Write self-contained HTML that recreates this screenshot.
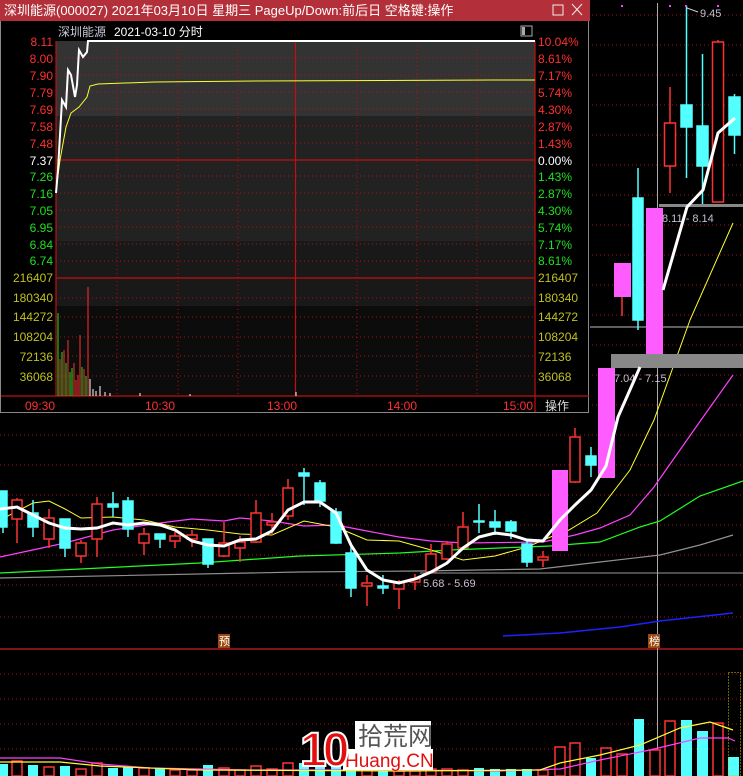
<!DOCTYPE html>
<html><head><meta charset="utf-8"><style>
html,body{margin:0;padding:0;background:#000;width:743px;height:776px;overflow:hidden}
svg{display:block}
text{font-family:"Liberation Sans","Noto Sans CJK SC",sans-serif}
</style></head><body>
<svg width="743" height="776" viewBox="0 0 743 776" xmlns="http://www.w3.org/2000/svg">
<rect width="743" height="776" fill="#000"/>
<!-- main grid dotted -->
<g stroke="#a01010" stroke-width="1" stroke-dasharray="1,3">
<line x1="0" y1="15" x2="743" y2="15"/><line x1="0" y1="45" x2="743" y2="45"/><line x1="0" y1="75" x2="743" y2="75"/>
<line x1="0" y1="105" x2="743" y2="105"/><line x1="0" y1="135" x2="743" y2="135"/><line x1="0" y1="165" x2="743" y2="165"/>
<line x1="0" y1="195" x2="743" y2="195"/><line x1="0" y1="225" x2="743" y2="225"/><line x1="0" y1="255" x2="743" y2="255"/>
<line x1="0" y1="285" x2="743" y2="285"/><line x1="0" y1="315" x2="743" y2="315"/><line x1="0" y1="345" x2="743" y2="345"/>
<line x1="0" y1="375" x2="743" y2="375"/><line x1="0" y1="405" x2="743" y2="405"/><line x1="0" y1="435" x2="743" y2="435"/>
<line x1="0" y1="465" x2="743" y2="465"/><line x1="0" y1="495" x2="743" y2="495"/><line x1="0" y1="525" x2="743" y2="525"/>
<line x1="0" y1="555" x2="743" y2="555"/><line x1="0" y1="585" x2="743" y2="585"/><line x1="0" y1="617" x2="743" y2="617"/>
<line x1="0" y1="674" x2="743" y2="674"/><line x1="0" y1="699" x2="743" y2="699"/><line x1="0" y1="724" x2="743" y2="724"/><line x1="0" y1="749" x2="743" y2="749"/>
</g>
<line x1="0" y1="649" x2="743" y2="649" stroke="#b01818" stroke-width="1.5"/>
<!-- grey level lines -->
<line x1="420" y1="573" x2="743" y2="573" stroke="#9a9a9a" stroke-width="1"/>
<line x1="590" y1="327" x2="743" y2="327" stroke="#bbb" stroke-width="1"/>
<line x1="657.5" y1="3" x2="657.5" y2="776" stroke="#aaa" stroke-width="1"/>
<!-- MAs -->
<g fill="none">
<polyline stroke="#909090" stroke-width="1.2" points="0,578 300,572 420,571 540,569 600,562 660,555 700,545 733,535"/>
<polyline stroke="#20ff20" stroke-width="1.2" points="0,573 200,563 300,556 400,553 450,550 550,546 600,542 640,527 660,521 700,496 743,481"/>
<polyline stroke="#ff40ff" stroke-width="1.2" points="0,557 65,543 113,530 160,523 192,519 224,521 240,518 272,521 304,526 336,525 367,531 399,537 431,541 463,543 543,542 575,535 600,528 630,515 654,487 701,420 733,375"/>
<polyline stroke="#ffff30" stroke-width="1" points="0,520 33,503 49,501 65,509 81,518 113,517 144,520 175,527 208,530 240,534 272,535 304,521 336,527 367,540 399,541 431,550 463,560 495,556 527,547 560,533 569,530 597,513 630,470 654,420 690,320 733,223"/>
<polyline stroke="#2020ff" stroke-width="1.5" points="503,636 560,633 620,627 660,621 733,613"/>
</g>
<!-- candles -->
<g stroke-width="1.5">
<g stroke="#54ffff" fill="#54ffff">
<line x1="3" y1="491" x2="3" y2="533"/><rect x="-3" y="491" width="10" height="36"/>
<line x1="33" y1="500" x2="33" y2="537"/><rect x="28" y="513" width="10" height="14"/>
<line x1="65" y1="519" x2="65" y2="557"/><rect x="60" y="519" width="10" height="29"/>
<line x1="113" y1="492" x2="113" y2="517"/><rect x="108" y="504" width="10" height="3"/>
<line x1="128" y1="497" x2="128" y2="537"/><rect x="123" y="501" width="10" height="28"/>
<line x1="160" y1="534" x2="160" y2="548"/><rect x="155" y="534" width="10" height="5"/>
<line x1="208" y1="539" x2="208" y2="568"/><rect x="203" y="539" width="10" height="25"/>
<line x1="304" y1="468" x2="304" y2="505"/><rect x="299" y="473" width="10" height="3"/>
<line x1="320" y1="480" x2="320" y2="507"/><rect x="315" y="483" width="10" height="18"/>
<line x1="336" y1="508" x2="336" y2="544"/><rect x="331" y="512" width="10" height="31"/>
<line x1="351" y1="545" x2="351" y2="597"/><rect x="346" y="553" width="10" height="35"/>
<line x1="383" y1="575" x2="383" y2="594"/><rect x="378" y="586" width="10" height="2"/>
<line x1="479" y1="504" x2="479" y2="533"/><rect x="474" y="521" width="10" height="1"/>
<line x1="495" y1="510" x2="495" y2="535"/><rect x="490" y="522" width="10" height="5"/>
<line x1="511" y1="520" x2="511" y2="539"/><rect x="506" y="522" width="10" height="9"/>
<line x1="527" y1="541" x2="527" y2="567"/><rect x="522" y="544" width="10" height="18"/>
<line x1="591" y1="447" x2="591" y2="477"/><rect x="586" y="456" width="10" height="9"/>
<line x1="638" y1="168" x2="638" y2="330"/><rect x="633" y="198" width="10" height="122"/>
<line x1="686.5" y1="6" x2="686.5" y2="178"/><rect x="681" y="105" width="11" height="22"/>
<line x1="702.5" y1="54" x2="702.5" y2="205"/><rect x="697" y="126" width="11" height="40"/>
<line x1="734.5" y1="94" x2="734.5" y2="154"/><rect x="729" y="97" width="11" height="38"/>
</g>
<g stroke="#ff3232" fill="#000">
<line x1="17" y1="498" x2="17" y2="543"/><rect x="12" y="500" width="10" height="19"/>
<line x1="49" y1="509" x2="49" y2="548"/><rect x="44" y="518" width="10" height="21"/>
<line x1="81" y1="540" x2="81" y2="563"/><rect x="76" y="543" width="10" height="13"/>
<line x1="97" y1="497" x2="97" y2="557"/><rect x="92" y="504" width="10" height="35"/>
<line x1="144" y1="528" x2="144" y2="555"/><rect x="139" y="534" width="10" height="9"/>
<line x1="175" y1="532" x2="175" y2="548"/><rect x="170" y="536" width="10" height="5"/>
<line x1="192" y1="530" x2="192" y2="547"/><rect x="187" y="535" width="10" height="4"/>
<line x1="224" y1="522" x2="224" y2="557"/><rect x="219" y="543" width="10" height="13"/>
<line x1="240" y1="536" x2="240" y2="562"/><rect x="235" y="542" width="10" height="6"/>
<line x1="256" y1="500" x2="256" y2="543"/><rect x="251" y="513" width="10" height="29"/>
<line x1="272" y1="513" x2="272" y2="535"/><rect x="267" y="522" width="10" height="3"/>
<line x1="288" y1="479" x2="288" y2="520"/><rect x="283" y="488" width="10" height="28"/>
<line x1="367" y1="575" x2="367" y2="606"/><rect x="362" y="583" width="10" height="3"/>
<line x1="399" y1="580" x2="399" y2="609"/><rect x="394" y="582" width="10" height="7"/>
<line x1="415" y1="574" x2="415" y2="590"/><rect x="410" y="579" width="10" height="3"/>
<line x1="431" y1="544" x2="431" y2="573"/><rect x="426" y="554" width="10" height="18"/>
<line x1="447" y1="541" x2="447" y2="560"/><rect x="442" y="544" width="10" height="15"/>
<line x1="463" y1="512" x2="463" y2="548"/><rect x="458" y="527" width="10" height="21"/>
<line x1="543" y1="551" x2="543" y2="567"/><rect x="538" y="557" width="10" height="3"/>
<line x1="575" y1="428" x2="575" y2="483"/><rect x="570" y="437" width="10" height="45"/>
<line x1="670" y1="87" x2="670" y2="193"/><rect x="664.5" y="123" width="11" height="43"/>
<line x1="718" y1="40" x2="718" y2="202"/><rect x="712.5" y="42" width="11" height="160"/>
</g>
<g fill="#ff5cff" stroke="none">
<rect x="552" y="470" width="16" height="81"/>
<rect x="598" y="368" width="17" height="110"/>
<rect x="614" y="263" width="17" height="34"/>
<rect x="646" y="208" width="17" height="146"/>
</g>
<line x1="622" y1="297" x2="622" y2="316" stroke="#ff3232" stroke-width="1.5"/>
</g>
<!-- grey zone boxes -->
<rect x="659" y="204" width="84" height="3" fill="#888"/>
<rect x="611" y="354" width="132" height="14" fill="#888"/>
<text x="662" y="222" font-size="11" fill="#c0c0d0">8.11 - 8.14</text>
<text x="614" y="382" font-size="11" fill="#c0c0d0">7.04 - 7.15</text>
<text x="423" y="587" font-size="11" fill="#c0c0d0">5.68 - 5.69</text>
<text x="700" y="17" font-size="11" fill="#c0c0d0">9.45</text>
<polyline points="687,8 698,12" stroke="#ccc" fill="none"/>
<g fill="#ff40ff"><rect x="621" y="5" width="2" height="2"/><rect x="669" y="5" width="2" height="2"/><rect x="685" y="5" width="2" height="2"/><rect x="717" y="5" width="2" height="2"/></g>
<!-- MA5 white -->
<polyline fill="none" stroke="#fff" stroke-width="3" points="0,509 17,507 33,515 49,523 65,528 81,529 97,528 113,523 128,525 144,523 160,525 175,530 192,541 208,545 224,546 240,540 256,539 272,531 288,510 304,502 320,502 336,513 351,545 367,570 383,580 399,583 415,579 431,572 447,563 463,548 479,537 495,533 511,535 527,540 543,541 560,520 575,505 591,490 606,466 618,417 640,367"/>
<polyline fill="none" stroke="#fff" stroke-width="3" points="663,290 687,207 703,190 718,133 735,118"/>
<!-- markers -->
<rect x="218" y="634" width="12" height="14" fill="#9a4a10"/><text x="219" y="645" font-size="11" fill="#fff">预</text>
<rect x="648" y="634" width="12" height="14" fill="#9a4a10"/><text x="649" y="645" font-size="11" fill="#fff">榜</text>
<!-- volume -->
<g stroke-width="1.5">
<g fill="#54ffff" stroke="none">
<rect x="-2" y="764" width="10" height="12"/><rect x="28" y="765" width="10" height="11"/><rect x="60" y="766" width="10" height="10"/>
<rect x="108" y="768" width="10" height="8"/><rect x="123" y="766" width="10" height="10"/><rect x="155" y="768" width="10" height="8"/>
<rect x="203" y="765" width="10" height="11"/><rect x="299" y="763" width="10" height="13"/><rect x="315" y="765" width="10" height="11"/>
<rect x="331" y="765" width="10" height="11"/><rect x="346" y="765" width="10" height="11"/><rect x="378" y="769" width="10" height="7"/>
<rect x="474" y="768" width="10" height="8"/><rect x="490" y="769" width="10" height="7"/><rect x="506" y="769" width="10" height="7"/>
<rect x="522" y="769" width="10" height="7"/><rect x="586" y="758" width="10" height="18"/><rect x="634" y="719" width="10" height="57"/>
<rect x="681" y="720" width="11" height="56"/><rect x="697" y="731" width="11" height="45"/><rect x="728" y="757" width="11" height="19"/>
</g>
<g fill="#000" stroke="#ff3232">
<rect x="12" y="761" width="10" height="15"/><rect x="44" y="767" width="10" height="9"/><rect x="76" y="769" width="10" height="7"/>
<rect x="92" y="763" width="10" height="13"/><rect x="139" y="768" width="10" height="8"/><rect x="170" y="770" width="10" height="6"/>
<rect x="187" y="770" width="10" height="6"/><rect x="219" y="768" width="10" height="8"/><rect x="235" y="770" width="10" height="6"/>
<rect x="251" y="766" width="10" height="10"/><rect x="267" y="769" width="10" height="7"/><rect x="283" y="763" width="10" height="13"/>
<rect x="362" y="770" width="10" height="6"/><rect x="394" y="771" width="10" height="5"/><rect x="410" y="771" width="10" height="5"/>
<rect x="426" y="769" width="10" height="7"/><rect x="442" y="769" width="10" height="7"/><rect x="458" y="770" width="10" height="6"/>
<rect x="538" y="770" width="10" height="6"/><rect x="555" y="747" width="10" height="29"/><rect x="570" y="743" width="10" height="33"/>
<rect x="601" y="748" width="10" height="28"/><rect x="617" y="754" width="10" height="22"/><rect x="650" y="750" width="10" height="26"/>
<rect x="665" y="721" width="10" height="55"/><rect x="713" y="723" width="10" height="53"/>
</g>
</g>
<rect x="728.5" y="672.5" width="12" height="103" fill="none" stroke="#cc0" stroke-dasharray="1,2"/>
<polyline fill="none" stroke="#ff40ff" stroke-width="1.2" points="0,758 40,758 60,758 100,764 150,768 250,770 400,770 500,771 560,769 600,760 650,750 700,738 728,738 735,741"/>
<polyline fill="none" stroke="#ffff30" stroke-width="1.2" points="0,762 60,762 100,766 200,770 400,771 540,770 560,763 600,755 640,745 680,728 710,722 733,730"/>
<!-- watermark -->
<rect x="355" y="721" width="76" height="29" fill="#fff"/>
<text x="358" y="745" font-size="25" fill="#555" font-family="'Noto Sans CJK SC',sans-serif">拾荒网</text>
<rect x="343" y="749" width="90" height="21" fill="#fff"/>
<text x="345" y="767" font-size="19" fill="#e01010">Huang.CN</text>
<text x="300" y="766" font-size="48" font-weight="bold" fill="#e01010" stroke="#fff" stroke-width="2" letter-spacing="-4">10</text>
<!-- POPUP -->
<rect x="0" y="0" width="590" height="413" fill="#000"/>
<rect x="0.5" y="20.5" width="588" height="392" fill="none" stroke="#888" stroke-width="1"/>
<rect x="0" y="0" width="590" height="21" fill="#b3303a"/>
<text x="4" y="15" font-size="13" fill="#fff">深圳能源(000027) 2021年03月10日 星期三 PageUp/Down:前后日 空格键:操作</text>
<rect x="553" y="5" width="10" height="10" fill="none" stroke="#eee"/>
<path d="M572,4 L582,15 M582,4 L572,15" stroke="#eee" stroke-width="1"/>
<text x="58" y="36" font-size="12" fill="#c8c8d8">深圳能源</text><text x="114" y="36" font-size="12" fill="#fff">2021-03-10 分时</text>
<rect x="521" y="26" width="11" height="10" fill="none" stroke="#aaa"/><rect x="522" y="27" width="3" height="8" fill="#aaa"/>
<!-- plot bg -->
<rect x="56" y="41" width="479" height="75" fill="#333"/>
<rect x="56" y="116" width="479" height="125" fill="#222"/>
<rect x="56" y="241" width="479" height="65" fill="#191919"/>
<rect x="56" y="306" width="479" height="90" fill="#0c0c0c"/>
<g stroke="#b01010" stroke-dasharray="1,3">
<line x1="56" y1="58" x2="535" y2="58"/><line x1="56" y1="75" x2="535" y2="75"/><line x1="56" y1="92" x2="535" y2="92"/>
<line x1="56" y1="109" x2="535" y2="109"/><line x1="56" y1="126" x2="535" y2="126"/><line x1="56" y1="143" x2="535" y2="143"/>
<line x1="56" y1="176" x2="535" y2="176"/><line x1="56" y1="193" x2="535" y2="193"/><line x1="56" y1="210" x2="535" y2="210"/>
<line x1="56" y1="227" x2="535" y2="227"/><line x1="56" y1="244" x2="535" y2="244"/><line x1="56" y1="261" x2="535" y2="261"/>
<line x1="56" y1="298" x2="535" y2="298"/><line x1="56" y1="317" x2="535" y2="317"/><line x1="56" y1="337" x2="535" y2="337"/>
<line x1="56" y1="356" x2="535" y2="356"/><line x1="56" y1="376" x2="535" y2="376"/>
<line x1="117" y1="41" x2="117" y2="396"/><line x1="178" y1="41" x2="178" y2="396"/><line x1="238" y1="41" x2="238" y2="396"/>
<line x1="357" y1="41" x2="357" y2="396"/><line x1="417" y1="41" x2="417" y2="396"/><line x1="477" y1="41" x2="477" y2="396"/>
</g>
<g stroke="#c01010" stroke-width="1.2">
<line x1="56" y1="41" x2="56" y2="396"/><line x1="535" y1="41" x2="535" y2="412"/>
<line x1="56" y1="160" x2="535" y2="160"/><line x1="56" y1="278" x2="535" y2="278"/>
<line x1="295.5" y1="41" x2="295.5" y2="396"/><line x1="1" y1="396" x2="589" y2="396"/>
</g>
<!-- intraday volume -->
<g stroke-width="1">
<line x1="58" y1="313" x2="58" y2="396" stroke="#20e020"/><line x1="60" y1="359" x2="60" y2="396" stroke="#ff3030"/>
<line x1="62" y1="352" x2="62" y2="396" stroke="#20e020"/><line x1="64" y1="350" x2="64" y2="396" stroke="#ff3030"/>
<line x1="66" y1="363" x2="66" y2="396" stroke="#20e020"/><line x1="68" y1="340" x2="68" y2="396" stroke="#ff3030"/>
<line x1="70" y1="372" x2="70" y2="396" stroke="#20e020"/><line x1="72" y1="368" x2="72" y2="396" stroke="#20e020"/>
<line x1="74" y1="363" x2="74" y2="396" stroke="#ff3030"/><line x1="76" y1="380" x2="76" y2="396" stroke="#ff3030"/>
<line x1="78" y1="375" x2="78" y2="396" stroke="#ff3030"/><line x1="80" y1="335" x2="80" y2="396" stroke="#ff3030"/>
<line x1="82" y1="367" x2="82" y2="396" stroke="#20e020"/><line x1="84" y1="369" x2="84" y2="396" stroke="#ff3030"/>
<line x1="86" y1="376" x2="86" y2="396" stroke="#20e020"/><line x1="88" y1="287" x2="88" y2="396" stroke="#ff3030"/>
<line x1="90" y1="379" x2="90" y2="396" stroke="#fff"/><line x1="93" y1="389" x2="93" y2="396" stroke="#fff"/>
<line x1="96" y1="391" x2="96" y2="396" stroke="#fff"/><line x1="100" y1="386" x2="100" y2="396" stroke="#fff"/>
<line x1="105" y1="392" x2="105" y2="396" stroke="#fff"/><line x1="110" y1="393" x2="110" y2="396" stroke="#fff"/>
<line x1="140" y1="393" x2="140" y2="396" stroke="#fff"/><line x1="190" y1="394" x2="190" y2="396" stroke="#fff"/>
<line x1="296" y1="392" x2="296" y2="396" stroke="#fff"/>
</g>
<polyline fill="none" stroke="#ffff30" stroke-width="1" points="56,190 60,160 66,127 71,113 79,107 87,97 90,86 98,84 154,82 256,81 493,80 535,80"/>
<polyline fill="none" stroke="#fff" stroke-width="2" points="56,193 58,170 62,100 66,107 68,70 71,75 75,97 77,85 79,50 83,57 87,52 88,41 535,41"/>
<!-- axis labels -->
<g font-size="12" text-anchor="end">
<g fill="#ff3030"><text x="53" y="46">8.11</text><text x="53" y="63">8.00</text><text x="53" y="80">7.90</text><text x="53" y="97">7.79</text><text x="53" y="114">7.69</text><text x="53" y="131">7.58</text><text x="53" y="148">7.48</text></g>
<text x="53" y="165" fill="#fff">7.37</text>
<g fill="#20e020"><text x="53" y="181">7.26</text><text x="53" y="198">7.16</text><text x="53" y="215">7.05</text><text x="53" y="232">6.95</text><text x="53" y="249">6.84</text><text x="53" y="265">6.74</text></g>
<g fill="#c0c020"><text x="53" y="282">216407</text><text x="53" y="302">180340</text><text x="53" y="321">144272</text><text x="53" y="341">108204</text><text x="53" y="361">72136</text><text x="53" y="381">36068</text></g>
</g>
<g font-size="12">
<g fill="#ff3030"><text x="538" y="46">10.04%</text><text x="538" y="63">8.61%</text><text x="538" y="80">7.17%</text><text x="538" y="97">5.74%</text><text x="538" y="114">4.30%</text><text x="538" y="131">2.87%</text><text x="538" y="148">1.43%</text></g>
<text x="538" y="165" fill="#fff">0.00%</text>
<g fill="#20e020"><text x="538" y="181">1.43%</text><text x="538" y="198">2.87%</text><text x="538" y="215">4.30%</text><text x="538" y="232">5.74%</text><text x="538" y="249">7.17%</text><text x="538" y="265">8.61%</text></g>
<g fill="#c0c020"><text x="538" y="282">216407</text><text x="538" y="302">180340</text><text x="538" y="321">144272</text><text x="538" y="341">108204</text><text x="538" y="361">72136</text><text x="538" y="381">36068</text></g>
<g fill="#ff3030"><text x="25" y="410">09:30</text><text x="145" y="410">10:30</text><text x="267" y="410">13:00</text><text x="387" y="410">14:00</text><text x="503" y="410">15:00</text></g>
<text x="545" y="410" fill="#ddd">操作</text>
</g>
</svg>
</body></html>
